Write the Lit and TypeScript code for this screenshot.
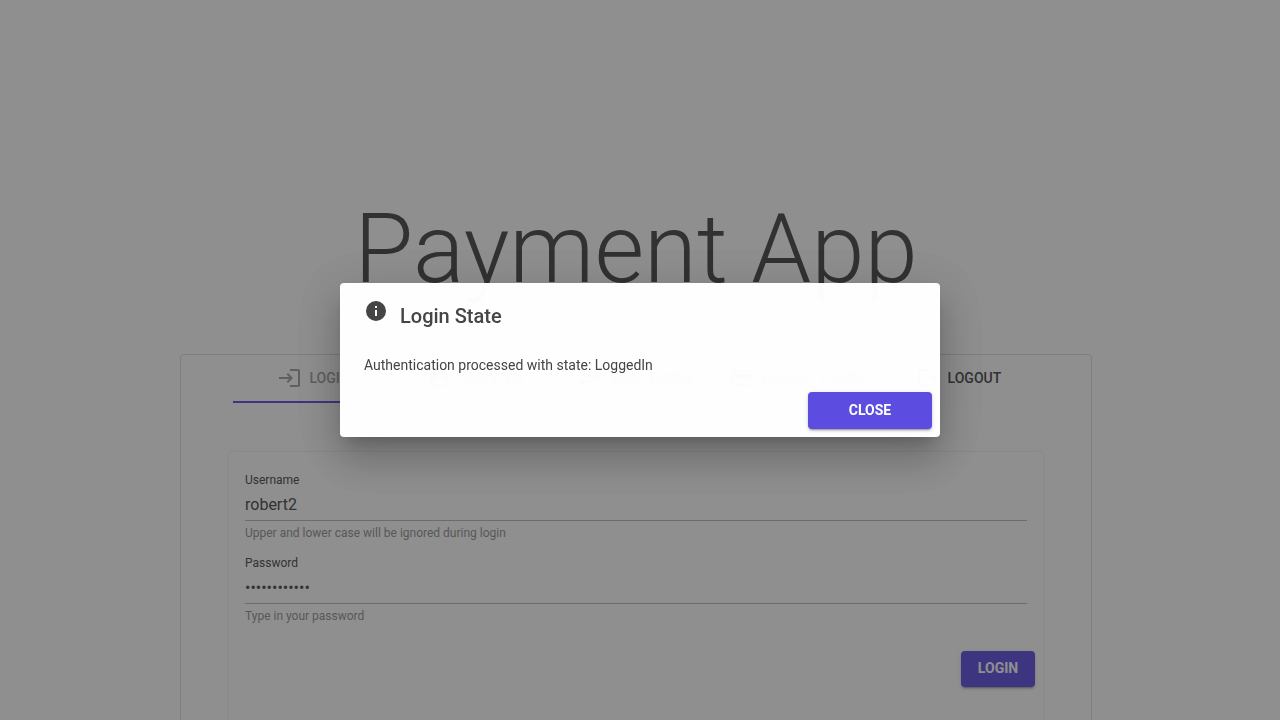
import { LitElement, html, css } from "lit";
import { customElement, state } from "lit/decorators.js";

const TABS = [
  { name: "Login", icon: "M12 3v2h8v14h-8v2h8a2 2 0 002-2V5a2 2 0 00-2-2zM10 7L8.600 8.400l2.600 2.600H1v2h10.200l-2.600 2.600L10 17l5-5z" },
  { name: "Register", icon: "M12 2a10 10 0 100 20 10 10 0 000-20zm0 3a3 3 0 110 6 3 3 0 010-6zm0 14.200a7.200 7.200 0 01-6-3.200c0-2 4-3.100 6-3.100s6 1.100 6 3.100a7.200 7.200 0 01-6 3.200z" },
  { name: "Send funds", icon: "M2 21l21-9L2 3v7l15 2-15 2z" },
  { name: "Deposit funds", icon: "M20 4H4a2 2 0 00-2 2v12a2 2 0 002 2h16a2 2 0 002-2V6a2 2 0 00-2-2zm0 14H4v-6h16zm0-10H4V6h16z" },
  { name: "Logout", icon: "M4 3h8v2H4v14h8v2H4a2 2 0 01-2-2V5a2 2 0 012-2zM17 7l5 5-5 5-1.400-1.400 2.600-2.600H8v-2h10.200l-2.600-2.600z" },
];

@customElement("app-root")
export class AppRoot extends LitElement {
  @state() private open = true;
  @state() private current = 0;

  static styles = css`
    :host {
      display: block;
      min-height: 100vh;
      background: #fff;
      color: #444;
      font: 400 14px/20px Roboto, "Liberation Sans", sans-serif;
    }
    * { box-sizing: border-box; }
    .page { height: 100vh; overflow: hidden; padding: 201px 188px 0 180px; }
    h1 { margin: 0; text-align: center; font-weight: 300; font-size: 96px; line-height: 96px; }
    .panel {
      margin: 57px 0 0;
      height: 600px;
      border: 1px solid #dcdcdc;
      border-radius: 4px;
      padding: 0 48px;
    }
    .tabs { display: flex; height: 48px; padding: 0 4px; }
    .tab {
      flex: 1 1 0;
      min-width: 0;
      display: flex;
      align-items: center;
      justify-content: center;
      gap: 8px;
      padding: 0;
      border: 0;
      border-bottom: 2px solid transparent;
      background: none;
      color: #444;
      font: 500 14px/20px Roboto, "Liberation Sans", sans-serif;
      text-transform: uppercase;
      white-space: nowrap;
    }
    .tab.active { border-color: #5b4be1; color: #a0a0a0; }
    svg { width: 24px; height: 24px; fill: currentColor; flex: none; }
    .card {
      margin-top: 49px;
      height: 400px;
      border-radius: 4px;
      padding: 20px 16px 16px;
      box-shadow: 0 0 3px rgba(0, 0, 0, 0.14);
    }
    .field { height: 83px; }
    .field label { display: block; font-size: 12px; line-height: 16px; }
    .field input {
      display: block;
      width: 100%;
      height: 33px;
      padding: 0;
      border: 0;
      border-bottom: 1px solid #b8b8b8;
      border-radius: 0;
      background: none;
      outline: 0;
      color: #444;
      font: 400 16px/24px Roboto, "Liberation Sans", sans-serif;
    }
    .hint { display: block; margin-top: 4px; font-size: 12px; line-height: 16px; color: #909090; }
    .actions { display: flex; justify-content: flex-end; margin: 13px -8px 0 0; }
    .btn {
      min-width: 74px;
      height: 36px;
      padding: 0 16px 2px;
      border: 0;
      border-radius: 4px;
      background: #5b4be1;
      color: #fff;
      font: 700 14px/20px Roboto, "Liberation Sans", sans-serif;
      text-transform: uppercase;
      box-shadow: 0 3px 1px -2px rgba(0, 0, 0, 0.2), 0 2px 2px rgba(0, 0, 0, 0.14), 0 1px 5px rgba(0, 0, 0, 0.12);
    }
    .scrim {
      position: fixed;
      inset: 0;
      display: flex;
      align-items: center;
      justify-content: center;
      background: rgba(32, 32, 32, 0.5);
    }
    .dialog {
      width: 600px;
      max-width: 90vw;
      border-radius: 4px;
      background: #fff;
      opacity: 0.99;
      box-shadow: 0 11px 15px -7px rgba(0, 0, 0, 0.2), 0 24px 38px 3px rgba(0, 0, 0, 0.14), 0 9px 46px 8px rgba(0, 0, 0, 0.12);
    }
    .dialog h2 {
      display: flex;
      align-items: flex-start;
      gap: 12px;
      margin: 0;
      padding: 16px 24px 0;
      font-weight: 500;
      font-size: 20px;
      line-height: 34px;
    }
    .dialog p { margin: 0; padding: 22px 24px 17px; }
    .dialog footer { display: flex; justify-content: flex-end; padding: 0 8px 8px; }
    .close { width: 124px; height: 37px; }
  `;

  render() {
    return html`
      <main class="page">
        <h1>Payment App</h1>
        <section class="panel">
          <div class="tabs" role="tablist">
            ${TABS.map(
              (t, i) => html`<button
                class="tab ${i === this.current ? "active" : ""}"
                role="tab"
                aria-selected=${i === this.current}
                @click=${() => (this.current = i)}
              >
                <svg viewBox="0 0 24 24" aria-hidden="true"><path d=${t.icon} /></svg>${t.name}
              </button>`
            )}
          </div>
          <form class="card" @submit=${(e: Event) => e.preventDefault()}>
            <div class="field">
              <label for="user">Username</label>
              <input id="user" type="text" value="robert2" />
              <span class="hint">Upper and lower case will be ignored during login</span>
            </div>
            <div class="field">
              <label for="pass">Password</label>
              <input id="pass" type="password" value="abcdefghijkl" />
              <span class="hint">Type in your password</span>
            </div>
            <div class="actions"><button class="btn" type="submit">Login</button></div>
          </form>
        </section>
      </main>
      ${this.open
        ? html`<div class="scrim">
            <div class="dialog" role="alertdialog" aria-modal="true" aria-labelledby="title">
              <h2>
                <svg viewBox="0 0 24 24" aria-hidden="true"><path d="M12 2a10 10 0 100 20 10 10 0 000-20zm1 15h-2v-6h2zm0-8h-2V7h2z" /></svg>
                <span id="title">Login State</span>
              </h2>
              <p>Authentication processed with state: LoggedIn</p>
              <footer><button class="btn close" @click=${() => (this.open = false)}>Close</button></footer>
            </div>
          </div>`
        : ""}
    `;
  }
}
